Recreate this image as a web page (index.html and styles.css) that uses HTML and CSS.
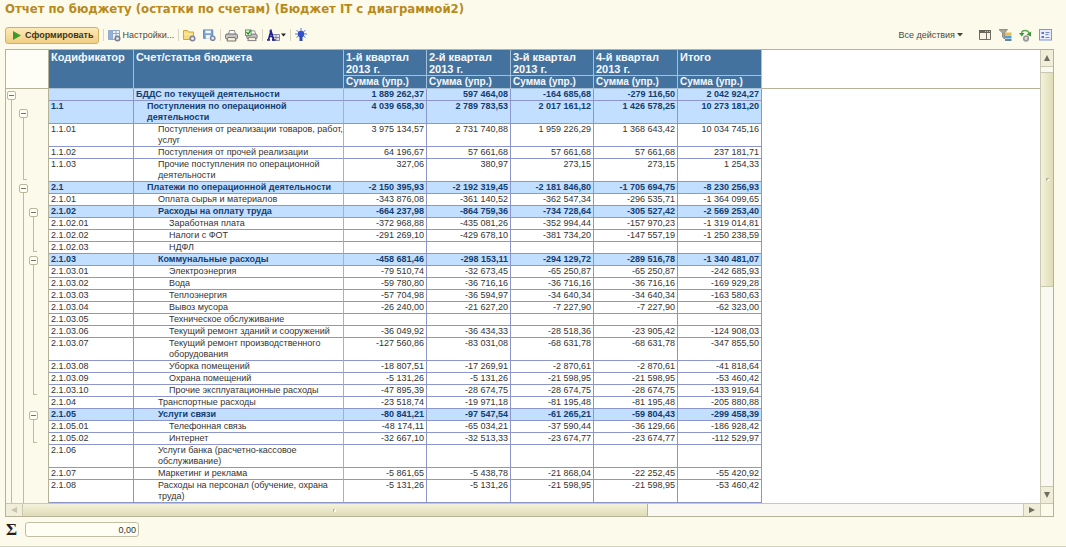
FILE: index.html
```html
<!DOCTYPE html>
<html lang="ru">
<head>
<meta charset="utf-8">
<title>Отчет по бюджету</title>
<link rel="stylesheet" href="styles.css">
</head>
<body>
<h1 class="title">Отчет по бюджету (остатки по счетам) (Бюджет IT с диаграммой2)</h1>

<div class="toolbar">
  <button class="run" type="button"><svg width="8" height="9" viewBox="0 0 8 9"><path d="M0 0L8 4.500L0 9z" fill="#3c9a2c"/></svg>Сформировать</button>
  <span class="sep"></span>
  <button class="tool" type="button"><svg width="13" height="13" viewBox="0 0 13 13"><path d="M.5 1.500h11v9H.5zM4.500 1.500v9M8 1.500v9M.5 4.500h11" fill="#eaf2fa" stroke="#8fa9c6"/><path d="M1 2h3v8H1z" fill="#8fb2dc"/><circle cx="9.500" cy="9.500" r="2.300" fill="#ddd" stroke="#777f92" stroke-width="1.500"/></svg>Настройки...</button>
  <span class="sep"></span>
  <div class="set">
  <button class="tool" type="button" aria-label="Открыть вариант"><svg width="13" height="13" viewBox="0 0 13 13"><path d="M.5 10.500v-9h4l1 1.500h5v7.500z" fill="#f7dc7c" stroke="#d4a63e"/><path d="M1 5h9" stroke="#fff0b8"/><circle cx="9.500" cy="9.500" r="2.300" fill="#e8e8ee" stroke="#808698" stroke-width="1.500"/></svg></button>
  <button class="tool" type="button" aria-label="Сохранить вариант"><svg width="13" height="13" viewBox="0 0 14 13"><path d="M.5 .5h10v9H.5z" fill="#76a2d6" stroke="#5c84b8"/><path d="M2.500 1h6v3h-6zM3 6h5v4H3z" fill="#f2f7fd"/><circle cx="10.500" cy="9.500" r="2.300" fill="#e8e8ee" stroke="#7a8298" stroke-width="1.500"/></svg></button>
  </div>
  <span class="sep"></span>
  <div class="set">
  <button class="tool" type="button" aria-label="Печать"><svg width="13" height="13" viewBox="0 0 13 13"><path d="M3.500 5.500l1-4h5l1 4" fill="#fff" stroke="#8a8a8a"/><rect x=".5" y="5" width="12" height="5" rx="1.500" fill="#c5c5c5" stroke="#6d6d6d"/><path d="M3 8.500h7l1 3.500H2z" fill="#f5eedb" stroke="#777"/></svg></button>
  <button class="tool" type="button" aria-label="Предварительный просмотр"><svg width="13" height="13" viewBox="0 0 14 13"><path d="M5.500 5.500l1-4h4l1 4" fill="#fff" stroke="#8a8a8a"/><rect x="2" y="5" width="11" height="5" rx="1.500" fill="#c5c5c5" stroke="#6d6d6d"/><path d="M4 8.500h7l1 3.500H3z" fill="#f5eedb" stroke="#777"/><rect x=".5" y=".5" width="6" height="6" fill="#e3f3dc" stroke="#5b9b4f"/><path d="M1.500 3l2 2L6 1" fill="none" stroke="#24832a" stroke-width="1.300"/></svg></button>
  </div>
  <span class="sep"></span>
  <button class="tool" type="button" aria-label="Оформление"><svg width="19" height="13" viewBox="0 0 19 13"><path d="M5.500 5.500h7v6h-7zM5.500 8.500h7M9 5.500v6" fill="#e4e4ec" stroke="#8a8a9e"/><path d="M1.500 10.500L4 2L6.500 10.500M2.500 7.500h3M0 11h3M5 11h3.500M2.500 2H4.500" fill="none" stroke="#23238e" stroke-width="1.700"/><path d="M14 4.500h5L16.500 7.500z" fill="#222"/></svg></button>
  <span class="sep"></span>
  <button class="tool" type="button" aria-label="Расшифровка"><svg width="12" height="14" viewBox="0 0 12 14"><path d="M6 0v3M0 6h12M1.500 2l3 3M10.500 2l-3 3M1.500 9.500L4 7.500M10.500 9.500L8 7.500" stroke="#5d79dc"/><circle cx="6" cy="6" r="3.200" fill="#3450cc"/><path d="M4.500 8h3v5h-3z" fill="#3048a8"/></svg></button>
  <span class="grow"></span>
  <button class="tool actions" type="button">Все действия <svg width="6" height="4" viewBox="0 0 6 4"><path d="M0 0h6L3 3.500z" fill="#4c4a28"/></svg></button>
  <div class="set views">
  <button class="tool" type="button" aria-label="Заголовки"><svg width="13" height="12" viewBox="0 0 13 12"><path d="M.5 1.500h11v9H.5z" fill="#f6f3e4" stroke="#706d62"/><path d="M7.500 4v6" stroke="#706d62"/><path d="M0 1h12v3H0z" fill="#67645a"/><path d="M6 2.500h5" stroke="#c8c4b4" stroke-dasharray="1 1"/></svg></button>
  <button class="tool" type="button" aria-label="Отбор"><svg width="13" height="13" viewBox="0 0 13 13"><path d="M0 .5h8.500L5.500 4v6L3.500 8V4z" fill="#a9a79a" stroke="#77766a" stroke-width=".7"/><path d="M6 3.500h6.500v2.500H6z" fill="#ecbb54"/><path d="M6 6.500h6.500v3H6z" fill="#4aa3df"/><path d="M6 10h6.500v2H6z" fill="#67849c"/></svg></button>
  <button class="tool" type="button" aria-label="Обновить"><svg width="13" height="13" viewBox="0 0 13 13"><path d="M2.500 5C2.500 3 4 1.500 6 1.500S9.500 2.500 10 4" fill="none" stroke="#5fa85c" stroke-width="1.500"/><path d="M0 4h5.500L2.800 7.500zM7.500 5.500L12 2.500v5z" fill="#3f9440"/><circle cx="7" cy="9.500" r="2.300" fill="#ddd" stroke="#9a9b97" stroke-width="1.700"/></svg></button>
  <button class="tool" type="button" aria-label="Свойства"><svg width="13" height="12" viewBox="0 0 13 12"><rect x=".5" y=".5" width="12" height="10.500" fill="#e9edff" stroke="#8293ce"/><path d="M2.500 3h2.500v2H2.500zM2.500 7h2.500v2H2.500z" fill="#5d75c5"/><path d="M6.500 3.500h4M6.500 5.500h3M6.500 8.500h4" stroke="#7486cb"/></svg></button>
  </div>
</div>

<main class="report">
  <div class="sheet">
  <table class="grid">
    <colgroup><col class="lane-a"><col class="lane"><col class="lane"><col class="pad"><col class="code"><col class="name"><col class="sum"><col class="sum-wide"><col class="sum"><col class="sum-wide"><col class="sum-wide"></colgroup>
    <thead>
      <tr class="periods"><td class="corner" colspan="4" rowspan="2"></td><th rowspan="2">Кодификатор</th><th rowspan="2">Счет/статья бюджета</th><th>1-й квартал 2013 г.</th><th>2-й квартал 2013 г.</th><th>3-й квартал 2013 г.</th><th>4-й квартал 2013 г.</th><th>Итого</th><td class="rest" rowspan="2"></td></tr>
      <tr class="measures"><th>Сумма (упр.)</th><th>Сумма (упр.)</th><th>Сумма (упр.)</th><th>Сумма (упр.)</th><th>Сумма (упр.)</th></tr>
    </thead>
    <tbody>
      <tr class="group"><td class="t open"><button class="fold" type="button" aria-label="Свернуть"></button></td><td class="t n"></td><td class="t n" rowspan="7"></td><td class="t n edge" rowspan="30"></td><td></td><td>БДДС по текущей деятельности</td><td>1 889 262,37</td><td>597 464,08</td><td>-164 685,68</td><td>-279 116,50</td><td>2 042 924,27</td></tr>
      <tr class="group"><td class="t line" rowspan="29"></td><td class="t open"><button class="fold" type="button" aria-label="Свернуть"></button></td><td>1.1</td><td class="i1">Поступления по операционной<br>деятельности</td><td>4 039 658,30</td><td>2 789 783,53</td><td>2 017 161,12</td><td>1 426 578,25</td><td>10 273 181,20</td></tr>
      <tr><td class="t line end" rowspan="3"></td><td>1.1.01</td><td class="i2">Поступления от реализации товаров, работ,<br>услуг</td><td>3 975 134,57</td><td>2 731 740,88</td><td>1 959 226,29</td><td>1 368 643,42</td><td>10 034 745,16</td></tr>
      <tr><td>1.1.02</td><td class="i2">Поступления от прочей реализации</td><td>64 196,67</td><td>57 661,68</td><td>57 661,68</td><td>57 661,68</td><td>237 181,71</td></tr>
      <tr><td>1.1.03</td><td class="i2">Прочие поступления по операционной<br>деятельности</td><td>327,06</td><td>380,97</td><td>273,15</td><td>273,15</td><td>1 254,33</td></tr>
      <tr class="group"><td class="t open"><button class="fold" type="button" aria-label="Свернуть"></button></td><td>2.1</td><td class="i1">Платежи по операционной деятельности</td><td>-2 150 395,93</td><td>-2 192 319,45</td><td>-2 181 846,80</td><td>-1 705 694,75</td><td>-8 230 256,93</td></tr>
      <tr><td class="t line" rowspan="24"></td><td>2.1.01</td><td class="i2">Оплата сырья и материалов</td><td>-343 876,08</td><td>-361 140,52</td><td>-362 547,34</td><td>-296 535,71</td><td>-1 364 099,65</td></tr>
      <tr class="group"><td class="t open"><button class="fold" type="button" aria-label="Свернуть"></button></td><td>2.1.02</td><td class="i2">Расходы на оплату труда</td><td>-664 237,98</td><td>-864 759,36</td><td>-734 728,64</td><td>-305 527,42</td><td>-2 569 253,40</td></tr>
      <tr><td class="t line end" rowspan="3"></td><td>2.1.02.01</td><td class="i3">Заработная плата</td><td>-372 968,88</td><td>-435 081,26</td><td>-352 994,44</td><td>-157 970,23</td><td>-1 319 014,81</td></tr>
      <tr><td>2.1.02.02</td><td class="i3">Налоги с ФОТ</td><td>-291 269,10</td><td>-429 678,10</td><td>-381 734,20</td><td>-147 557,19</td><td>-1 250 238,59</td></tr>
      <tr><td>2.1.02.03</td><td class="i3">НДФЛ</td><td></td><td></td><td></td><td></td><td></td></tr>
      <tr class="group"><td class="t open"><button class="fold" type="button" aria-label="Свернуть"></button></td><td>2.1.03</td><td class="i2">Коммунальные расходы</td><td>-458 681,46</td><td>-298 153,11</td><td>-294 129,72</td><td>-289 516,78</td><td>-1 340 481,07</td></tr>
      <tr><td class="t line end" rowspan="10"></td><td>2.1.03.01</td><td class="i3">Электроэнергия</td><td>-79 510,74</td><td>-32 673,45</td><td>-65 250,87</td><td>-65 250,87</td><td>-242 685,93</td></tr>
      <tr><td>2.1.03.02</td><td class="i3">Вода</td><td>-59 780,80</td><td>-36 716,16</td><td>-36 716,16</td><td>-36 716,16</td><td>-169 929,28</td></tr>
      <tr><td>2.1.03.03</td><td class="i3">Теплоэнергия</td><td>-57 704,98</td><td>-36 594,97</td><td>-34 640,34</td><td>-34 640,34</td><td>-163 580,63</td></tr>
      <tr><td>2.1.03.04</td><td class="i3">Вывоз мусора</td><td>-26 240,00</td><td>-21 627,20</td><td>-7 227,90</td><td>-7 227,90</td><td>-62 323,00</td></tr>
      <tr><td>2.1.03.05</td><td class="i3">Техническое обслуживание</td><td></td><td></td><td></td><td></td><td></td></tr>
      <tr><td>2.1.03.06</td><td class="i3">Текущий ремонт зданий и сооружений</td><td>-36 049,92</td><td>-36 434,33</td><td>-28 518,36</td><td>-23 905,42</td><td>-124 908,03</td></tr>
      <tr><td>2.1.03.07</td><td class="i3">Текущий ремонт производственного<br>оборудования</td><td>-127 560,86</td><td>-83 031,08</td><td>-68 631,78</td><td>-68 631,78</td><td>-347 855,50</td></tr>
      <tr><td>2.1.03.08</td><td class="i3">Уборка помещений</td><td>-18 807,51</td><td>-17 269,91</td><td>-2 870,61</td><td>-2 870,61</td><td>-41 818,64</td></tr>
      <tr><td>2.1.03.09</td><td class="i3">Охрана помещений</td><td>-5 131,26</td><td>-5 131,26</td><td>-21 598,95</td><td>-21 598,95</td><td>-53 460,42</td></tr>
      <tr><td>2.1.03.10</td><td class="i3">Прочие эксплуатационные расходы</td><td>-47 895,39</td><td>-28 674,75</td><td>-28 674,75</td><td>-28 674,75</td><td>-133 919,64</td></tr>
      <tr><td class="t n"></td><td>2.1.04</td><td class="i2">Транспортные расходы</td><td>-23 518,74</td><td>-19 971,18</td><td>-81 195,48</td><td>-81 195,48</td><td>-205 880,88</td></tr>
      <tr class="group"><td class="t open"><button class="fold" type="button" aria-label="Свернуть"></button></td><td>2.1.05</td><td class="i2">Услуги связи</td><td>-80 841,21</td><td>-97 547,54</td><td>-61 265,21</td><td>-59 804,43</td><td>-299 458,39</td></tr>
      <tr><td class="t line end" rowspan="2"></td><td>2.1.05.01</td><td class="i3">Телефонная связь</td><td>-48 174,11</td><td>-65 034,21</td><td>-37 590,44</td><td>-36 129,66</td><td>-186 928,42</td></tr>
      <tr><td>2.1.05.02</td><td class="i3">Интернет</td><td>-32 667,10</td><td>-32 513,33</td><td>-23 674,77</td><td>-23 674,77</td><td>-112 529,97</td></tr>
      <tr><td class="t n" rowspan="4"></td><td>2.1.06</td><td class="i2">Услуги банка (расчетно-кассовое<br>обслуживание)</td><td></td><td></td><td></td><td></td><td></td></tr>
      <tr><td>2.1.07</td><td class="i2">Маркетинг и реклама</td><td>-5 861,65</td><td>-5 438,78</td><td>-21 868,04</td><td>-22 252,45</td><td>-55 420,92</td></tr>
      <tr><td>2.1.08</td><td class="i2">Расходы на персонал (обучение, охрана<br>труда)</td><td>-5 131,26</td><td>-5 131,26</td><td>-21 598,95</td><td>-21 598,95</td><td>-53 460,42</td></tr>
      <tr><td>2.1.09</td><td class="i2">Расходы на содержание и аренду баз</td><td></td><td></td><td></td><td></td><td></td></tr>
    </tbody>
  </table>
  </div>
  <div class="vbar">
    <button class="arrow" type="button" aria-label="Вверх"><svg width="6" height="6" viewBox="0 0 6 6"><path d="M3 0L6 6H0z"/></svg></button>
    <span class="vgap"></span><span class="vthumb"><i class="grip"></i></span><span class="vtrack"></span>
    <button class="arrow" type="button" aria-label="Вниз"><svg width="6" height="6" viewBox="0 0 6 6"><path d="M0 0h6L3 6z"/></svg></button>
  </div>
  <div class="hbar">
    <button class="arrow off" type="button" aria-label="Влево"><svg width="6" height="6" viewBox="0 0 6 6"><path d="M6 0v6L0 3z"/></svg></button>
    <span class="hthumb"><i class="grip"></i></span><span class="htrack"></span>
    <button class="arrow" type="button" aria-label="Вправо"><svg width="6" height="6" viewBox="0 0 6 6"><path d="M0 0L6 3L0 6z"/></svg></button>
  </div>
  <div class="nook"></div>
</main>

<footer class="totals">
  <label for="total">Σ</label>
  <input id="total" type="text" value="0,00" readonly>
</footer>
</body>
</html>
```
FILE: styles.css
```css
* { box-sizing: border-box; }
body {
  margin: 0;
  height: 100vh;
  display: flex;
  flex-direction: column;
  background: #fcfaeb;
  border-bottom: 1px solid #d3d3bf;
  font-family: "Liberation Sans", Arial, sans-serif;
  font-size: 9px;
  color: #333;
  overflow: hidden;
}
button { font: inherit; color: inherit; margin: 0; padding: 0; border: 0; background: none; }
svg { display: block; flex: none; }

.title {
  margin: 0;
  padding: 0 5px;
  font: bold 13px/18px "DejaVu Sans Condensed", "DejaVu Sans", sans-serif;
  color: #b88a1c;
}
.toolbar {
  display: flex;
  align-items: center;
  gap: 4px;
  height: 31px;
  padding: 3px 14px 0 5px;
  color: #4c4a38;
}
.run {
  display: flex;
  align-items: center;
  gap: 4px;
  height: 17px;
  padding: 0 4px 0 7px;
  border: 1px solid #d2b062;
  border-radius: 3px;
  background: linear-gradient(#fdeab8, #f1cf84);
  font-weight: bold;
  color: #3e3621;
}
.sep { width: 1px; height: 12px; background: #d8d5c0; }
.tool { display: flex; align-items: center; gap: 2px; }
.grow { flex: 1; }
.set { display: flex; gap: 7px; }
.views { margin-left: 12px; }

.report {
  flex: 1;
  min-height: 0;
  margin: 0 12px 0 5px;
  display: grid;
  grid-template-columns: 1fr 13px;
  grid-template-rows: 1fr 13px;
  border: 1px solid #b4b39a;
}
.sheet { overflow: hidden; background: #fff; min-height: 0; }
.grid { width: 100%; table-layout: fixed; border-collapse: separate; border-spacing: 0; line-height: 11px; }
.lane-a { width: 12px; }
.lane { width: 10px; }
.pad { width: 11px; }
.code { width: 85px; }
.name { width: 210px; }
.sum { width: 83px; }
.sum-wide { width: 84px; }

th {
  padding: 1px 2px 0;
  text-align: left;
  vertical-align: top;
  font-size: 11px;
  line-height: 12px;
  color: #f4f8fb;
  background: #44729f;
  border-right: 1px solid #a8bfd8;
  border-bottom: 1px solid #a8bfd8;
}
.periods { height: 26px; }
.measures { height: 13px; }
.measures th { padding-top: 0; font-size: 10px; }
.corner, .rest { border-bottom: 1px solid #b4b39a; }
.corner { background: #fffef6; border-right: 1px solid #b4b39a; }

tbody tr { height: 12px; }
tbody td {
  padding: 0 2px;
  vertical-align: top;
  text-align: right;
  white-space: nowrap;
  border-right: 1px solid #8d96cc;
  border-bottom: 1px solid #8d96cc;
}
tbody td:not(.t):nth-last-child(6) { text-align: left; border-right-color: #b4b39a; }
tbody td:not(.t):nth-last-child(7) { text-align: left; }
.group td:not(.t) { background: #c3dfff; color: #123c70; font-weight: bold; }
tbody td.i1 { padding-left: 13px; }
tbody td.i2 { padding-left: 24px; }
tbody td.i3 { padding-left: 35px; }

tbody td.t { padding: 0; border: 0; background: #fcfaeb; }
tbody td.edge { border-right: 1px solid #b4b39a; }
tbody td.open {
  vertical-align: middle;
  background: linear-gradient(#bdbc9f, #bdbc9f) 5px 100% / 1px 50% no-repeat #fcfaeb;
}
tbody td.line { background: linear-gradient(#bdbc9f, #bdbc9f) 5px 0 / 1px 100% no-repeat #fcfaeb; }
tbody td.end {
  background:
    linear-gradient(#bdbc9f, #bdbc9f) 5px 0 / 1px calc(100% - 2px) no-repeat,
    linear-gradient(#bdbc9f, #bdbc9f) 5px calc(100% - 2px) / 4px 1px no-repeat #fcfaeb;
}
.fold {
  display: block;
  width: 9px;
  height: 9px;
  margin: 1px 0 0 1px;
  border: 1px solid #b9b79c;
  border-radius: 2px;
  background: linear-gradient(#77755f, #77755f) 1px 3px / 5px 1px no-repeat #fffef4;
}

.vbar { display: flex; flex-direction: column; border-left: 1px solid #c9c8b2; background: #f9f9f1; }
.hbar { display: flex; border-top: 1px solid #c9c8b2; background: #f9f9f1; }
.nook { border-top: 1px solid #c9c8b2; border-left: 1px solid #c9c8b2; background: #fcfaeb; }
.arrow { display: flex; align-items: center; justify-content: center; flex: 0 0 17px; background: #f0eed9; fill: #6f6e60; }
.vbar .arrow { border: solid #c9c8b2; border-width: 0 0 1px; }
.vbar .arrow:last-child { border-width: 1px 0 0; }
.hbar .arrow { border-left: 1px solid #c9c8b2; }
.hbar .off { border-width: 0; border-right: 1px solid #c9c8b2; fill: #c6c5b2; }
.vgap { height: 6px; border-bottom: 1px solid #c9c8b2; }
.vthumb, .hthumb { display: flex; align-items: center; justify-content: center; }
.vthumb { flex: 214; border-bottom: 1px solid #c9c8b2; background: linear-gradient(90deg, #f4f2dc, #dfdcb6); }
.vtrack { flex: 200; }
.hthumb { flex: 626; border-right: 1px solid #b4b39a; background: linear-gradient(#f4f2dc, #dfdcb6); }
.htrack { flex: 377; }
.grip { width: 3px; height: 3px; background: linear-gradient(135deg, #b9b79c 50%, #fffef4 50%); }

.totals { display: flex; align-items: center; gap: 8px; height: 29px; padding: 0 6px 4px; }
.totals label { font: bold 17px/16px "Liberation Serif", serif; color: #222; }
.totals input {
  width: 114px;
  height: 15px;
  padding: 0 2px;
  border: 1px solid #c0bea4;
  border-radius: 3px;
  background: #fffef4;
  font: 9px "Liberation Sans", Arial, sans-serif;
  text-align: right;
  color: #333;
}
```
